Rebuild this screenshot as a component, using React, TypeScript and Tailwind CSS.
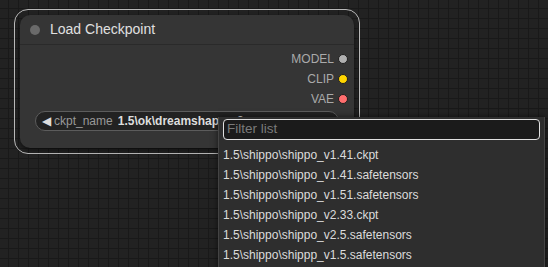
const items = [
  "1.5\\shippo\\shippo_v1.41.ckpt",
  "1.5\\shippo\\shippo_v1.41.safetensors",
  "1.5\\shippo\\shippo_v1.51.safetensors",
  "1.5\\shippo\\shippo_v2.33.ckpt",
  "1.5\\shippo\\shippo_v2.5.safetensors",
  "1.5\\shippo\\shippp_v1.5.safetensors",
];

const outputs = [
  { name: "MODEL", color: "bg-[#b0b0b0]" },
  { name: "CLIP", color: "bg-[#ffd500]" },
  { name: "VAE", color: "bg-[#ff6e6e]" },
];

const App = () => {
  return (
    <div
      className="relative w-[548px] h-[267px] overflow-hidden bg-[#222222] bg-[linear-gradient(#191919_1px,transparent_1px),linear-gradient(90deg,#191919_1px,transparent_1px)] bg-[size:10px_10px] bg-[position:-2px_-2px]"
      style={{ fontFamily: '"Liberation Sans", Arial, sans-serif' }}
    >
      {/* node selection outline */}
      <div className="absolute left-[14px] top-[9px] w-[346px] h-[145px] rounded-[14px] border-[1.5px] border-[#b8b8b8] p-[5px]">
        <div className="flex flex-col w-full h-full rounded-[10px] bg-[#353535] shadow-[0_2px_4px_rgba(0,0,0,0.5)]">
          {/* title */}
          <div className="flex items-center h-[30px] px-[10px] gap-[10px] border-b border-[#2a2a2a]">
            <div className="w-[10px] h-[10px] rounded-full bg-[#6a6a6a]" />
            <span className="text-[14px] text-[#e0e0e0]">Load Checkpoint</span>
          </div>
          {/* outputs */}
          <div className="flex flex-col items-end pt-[4px] pr-[6px]">
            {outputs.map((o) => (
              <div key={o.name} className="flex items-center h-[20px] gap-[4px]">
                <span className="text-[12px] text-[#aaaaaa]">{o.name}</span>
                <div className={`w-[10px] h-[10px] rounded-full border border-[#1e1e1e] ${o.color}`} />
              </div>
            ))}
          </div>
          {/* widget */}
          <div className="mx-[15px] mt-[2px] flex items-center h-[20px] rounded-full bg-[#222222] border border-[#5c5c5c] px-[6px] text-[12px]">
            <span className="text-[#dddddd] text-[12px] mr-[3px] leading-none">◀</span>
            <span className="text-[#999999]">ckpt_name</span>
            <span className="ml-[5px] text-[#dddddd] font-bold flex-1 overflow-hidden whitespace-nowrap">1.5\ok\dreamshaper_8</span>
            <span className="text-[#dddddd] text-[12px] leading-none">▶</span>
          </div>
        </div>
      </div>

      {/* dropdown menu */}
      <div className="absolute left-[218px] top-[117px] w-[327px] h-[170px] bg-[#2e2e2e] border-l border-r border-[#444] shadow-[0_0_6px_rgba(0,0,0,0.6)] px-[4px] pt-[2px]">
        <div className="flex items-center h-[21px] rounded-[4px] border-[1.5px] border-[#e0e0e0] bg-[#1b1b1b] px-[3px]">
          <span className="text-[13.5px] text-[#7a7a7a]">Filter list</span>
        </div>
        <div className="flex flex-col mt-[5px]">
          {items.map((it) => (
            <div key={it} className="flex items-center h-[20px] text-[12px] text-[#dcdcdc] whitespace-nowrap">
              {it}
            </div>
          ))}
        </div>
      </div>
    </div>
  );
};

export default App;
